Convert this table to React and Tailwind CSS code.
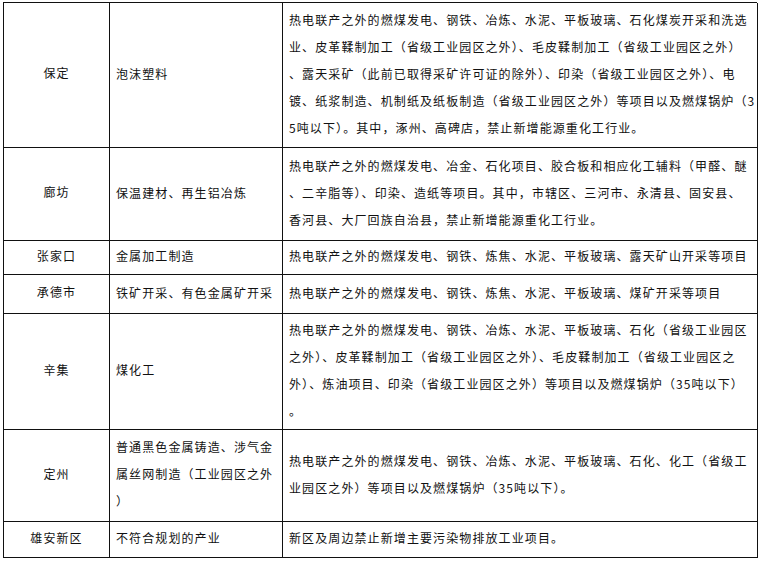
import React from "react";

const rows = [
  {
    h: "h-[145px]",
    city: "保定",
    ind: ["泡沫塑料"],
    proj: [
      "热电联产之外的燃煤发电、钢铁、冶炼、水泥、平板玻璃、石化煤炭开采和洗选",
      "业、皮革鞣制加工（省级工业园区之外）、毛皮鞣制加工（省级工业园区之外）",
      "、露天采矿（此前已取得采矿许可证的除外）、印染（省级工业园区之外）、电",
      "镀、纸浆制造、机制纸及纸板制造（省级工业园区之外）等项目以及燃煤锅炉（3",
      "5吨以下）。其中，涿州、高碑店，禁止新增能源重化工行业。",
    ],
  },
  {
    h: "h-[93px]",
    city: "廊坊",
    ind: ["保温建材、再生铝冶炼"],
    proj: [
      "热电联产之外的燃煤发电、冶金、石化项目、胶合板和相应化工辅料（甲醛、醚",
      "、二辛脂等）、印染、造纸等项目。其中，市辖区、三河市、永清县、固安县、",
      "香河县、大厂回族自治县，禁止新增能源重化工行业。",
    ],
  },
  {
    h: "h-[34px]",
    city: "张家口",
    ind: ["金属加工制造"],
    proj: ["热电联产之外的燃煤发电、钢铁、炼焦、水泥、平板玻璃、露天矿山开采等项目"],
  },
  {
    h: "h-[39px]",
    city: "承德市",
    ind: ["铁矿开采、有色金属矿开采"],
    proj: ["热电联产之外的燃煤发电、钢铁、炼焦、水泥、平板玻璃、煤矿开采等项目"],
  },
  {
    h: "h-[116px]",
    city: "辛集",
    ind: ["煤化工"],
    proj: [
      "热电联产之外的燃煤发电、钢铁、冶炼、水泥、平板玻璃、石化（省级工业园区",
      "之外）、皮革鞣制加工（省级工业园区之外）、毛皮鞣制加工（省级工业园区之",
      "外）、炼油项目、印染（省级工业园区之外）等项目以及燃煤锅炉（35吨以下）",
      "。",
    ],
  },
  {
    h: "h-[92px]",
    city: "定州",
    ind: ["普通黑色金属铸造、涉气金", "属丝网制造（工业园区之外", "）"],
    proj: [
      "热电联产之外的燃煤发电、钢铁、冶炼、水泥、平板玻璃、石化、化工（省级工",
      "业园区之外）等项目以及燃煤锅炉（35吨以下）。",
    ],
  },
  {
    h: "h-[36px]",
    city: "雄安新区",
    ind: ["不符合规划的产业"],
    proj: ["新区及周边禁止新增主要污染物排放工业项目。"],
  },
];

function Lines({ lines }) {
  return (
    <div className="flex flex-col">
      {lines.map((l, i) => (
        <div key={i} className="whitespace-nowrap leading-[27px]">
          {l}
        </div>
      ))}
    </div>
  );
}

export default function App() {
  return (
    <div
      className="w-[761px] h-[563px] bg-white pt-[2px] pl-[3px] text-[12px] tracking-[1.1px] text-[#111]"
      style={{ fontFamily: '"Noto Sans CJK SC", "Noto Sans", sans-serif' }}
    >
      <div className="grid grid-cols-[106px_173px_475px] w-[754px] border-l border-t border-[#111]">
        {rows.map((r, i) => (
          <React.Fragment key={i}>
            <div className={`${r.h} border-r border-b border-[#111] flex items-center justify-center pb-[4px]`}>
              {r.city}
            </div>
            <div className={`${r.h} border-r border-b border-[#111] flex items-center pl-[6px] pb-[4px]`}>
              <Lines lines={r.ind} />
            </div>
            <div className={`${r.h} border-r border-b border-[#111] flex items-center pl-[6px] pb-[4px]`}>
              <Lines lines={r.proj} />
            </div>
          </React.Fragment>
        ))}
      </div>
    </div>
  );
}
